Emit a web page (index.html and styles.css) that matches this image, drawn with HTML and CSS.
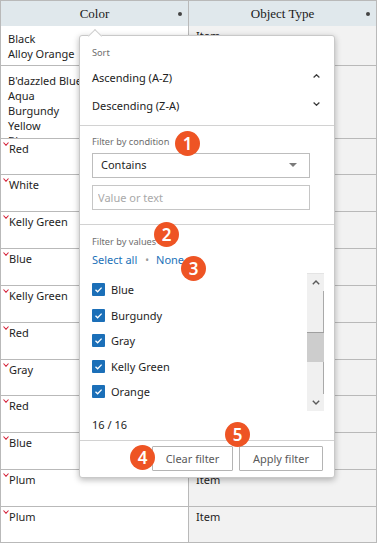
FILE: index.html
```html
<!DOCTYPE html>
<html lang="en">
<head>
<meta charset="utf-8">
<title>Filter menu</title>
<link rel="stylesheet" href="styles.css">
</head>
<body>
<div class="sheet">
  <div class="head">
    <div class="hcell c1"><span></span><span class="htext">Color</span><span class="dot"></span></div>
    <div class="hcell"><span></span><span class="htext">Object Type</span><span class="dot"></span></div>
  </div>

  <div class="row r1">
    <div class="cell c1 plain">Black<br>Alloy Orange</div>
    <div class="cell c2">Item</div>
  </div>
  <div class="row r2">
    <div class="cell c1 plain">B'dazzled Blue<br>Aqua<br>Burgundy<br>Yellow<br>Blue</div>
    <div class="cell c2">Item</div>
  </div>
  <div class="row s"><div class="cell c1"><svg class="mark" width="6" height="4" viewBox="0 0 6 4"><polyline points="0.5,0.5 3,3.3 5.5,0.5"/></svg>Red</div><div class="cell c2">Item</div></div>
  <div class="row"><div class="cell c1"><svg class="mark" width="6" height="4" viewBox="0 0 6 4"><polyline points="0.5,0.5 3,3.3 5.5,0.5"/></svg>White</div><div class="cell c2">Item</div></div>
  <div class="row"><div class="cell c1"><svg class="mark" width="6" height="4" viewBox="0 0 6 4"><polyline points="0.5,0.5 3,3.3 5.5,0.5"/></svg>Kelly Green</div><div class="cell c2">Item</div></div>
  <div class="row"><div class="cell c1"><svg class="mark" width="6" height="4" viewBox="0 0 6 4"><polyline points="0.5,0.5 3,3.3 5.5,0.5"/></svg>Blue</div><div class="cell c2">Item</div></div>
  <div class="row"><div class="cell c1"><svg class="mark" width="6" height="4" viewBox="0 0 6 4"><polyline points="0.5,0.5 3,3.3 5.5,0.5"/></svg>Kelly Green</div><div class="cell c2">Item</div></div>
  <div class="row"><div class="cell c1"><svg class="mark" width="6" height="4" viewBox="0 0 6 4"><polyline points="0.5,0.5 3,3.3 5.5,0.5"/></svg>Red</div><div class="cell c2">Item</div></div>
  <div class="row s"><div class="cell c1"><svg class="mark" width="6" height="4" viewBox="0 0 6 4"><polyline points="0.5,0.5 3,3.3 5.5,0.5"/></svg>Gray</div><div class="cell c2">Item</div></div>
  <div class="row"><div class="cell c1"><svg class="mark" width="6" height="4" viewBox="0 0 6 4"><polyline points="0.5,0.5 3,3.3 5.5,0.5"/></svg>Red</div><div class="cell c2">Item</div></div>
  <div class="row"><div class="cell c1"><svg class="mark" width="6" height="4" viewBox="0 0 6 4"><polyline points="0.5,0.5 3,3.3 5.5,0.5"/></svg>Blue</div><div class="cell c2">Item</div></div>
  <div class="row"><div class="cell c1"><svg class="mark" width="6" height="4" viewBox="0 0 6 4"><polyline points="0.5,0.5 3,3.3 5.5,0.5"/></svg>Plum</div><div class="cell c2">Item</div></div>
  <div class="row s"><div class="cell c1"><svg class="mark" width="6" height="4" viewBox="0 0 6 4"><polyline points="0.5,0.5 3,3.3 5.5,0.5"/></svg>Plum</div><div class="cell c2">Item</div></div>

  <div class="popup">
    <div class="notch"></div>
    <div class="sec sort">
      <div class="label">Sort</div>
      <div class="sitem"><span>Ascending (A-Z)</span><svg class="caret" width="7" height="4" viewBox="0 0 7 4"><polyline points="0.6,3.5 3.5,0.7 6.4,3.5"/></svg></div>
      <div class="sitem"><span>Descending (Z-A)</span><svg class="caret" width="7" height="4" viewBox="0 0 7 4"><polyline points="0.6,0.5 3.5,3.3 6.4,0.5"/></svg></div>
    </div>
    <div class="sec cond">
      <div class="label">Filter by condition</div>
      <div class="select"><span>Contains</span><svg width="8" height="4" viewBox="0 0 8 4"><polygon points="0,0 8,0 4,4"/></svg></div>
      <input class="txt" type="text" placeholder="Value or text">
    </div>
    <div class="sec vals">
      <div class="label">Filter by values</div>
      <div class="links"><span class="lnk">Select all</span><span class="bullet">•</span><span class="lnk">None</span></div>
      <div class="list">
        <div class="items">
          <div class="item"><span class="cb"><svg width="13" height="13" viewBox="0 0 13 13"><polyline points="3.5,6.8 5.6,8.8 9.6,4.6"/></svg></span>Blue</div>
          <div class="item"><span class="cb"><svg width="13" height="13" viewBox="0 0 13 13"><polyline points="3.5,6.8 5.6,8.8 9.6,4.6"/></svg></span>Burgundy</div>
          <div class="item"><span class="cb"><svg width="13" height="13" viewBox="0 0 13 13"><polyline points="3.5,6.8 5.6,8.8 9.6,4.6"/></svg></span>Gray</div>
          <div class="item"><span class="cb"><svg width="13" height="13" viewBox="0 0 13 13"><polyline points="3.5,6.8 5.6,8.8 9.6,4.6"/></svg></span>Kelly Green</div>
          <div class="item"><span class="cb"><svg width="13" height="13" viewBox="0 0 13 13"><polyline points="3.5,6.8 5.6,8.8 9.6,4.6"/></svg></span>Orange</div>
        </div>
        <div class="sbar">
          <div class="sbtn"><svg width="8" height="5" viewBox="0 0 8 5"><polyline points="0.8,4.2 4,1 7.2,4.2"/></svg></div>
          <div class="strack"><div class="sthumb"></div></div>
          <div class="sbtn"><svg width="8" height="5" viewBox="0 0 8 5"><polyline points="0.8,0.8 4,4 7.2,0.8"/></svg></div>
        </div>
      </div>
      <div class="count">16 / 16</div>
    </div>
    <div class="foot">
      <button class="btn clear">Clear filter</button>
      <button class="btn apply">Apply filter</button>
    </div>
  </div>

  <span class="badge b1">1</span>
  <span class="badge b2">2</span>
  <span class="badge b3">3</span>
  <span class="badge b4">4</span>
  <span class="badge b5">5</span>
</div>
</body>
</html>
```

FILE: styles.css
```css
* { box-sizing: border-box; }

body {
  margin: 0;
  background: #fff;
  font-family: "Noto Sans", "Open Sans", sans-serif;
  font-size: 11px;
  color: #1e1e1e;
}

.sheet {
  position: relative;
  width: 377px;
  height: 543px;
  overflow: hidden;
}

/* header */
.head {
  display: grid;
  grid-template-columns: 189px 188px;
  height: 26px;
  border-top: 1px solid #b9b9b9;
  background: #e0e8ec;
}
.hcell {
  display: grid;
  grid-template-columns: 1fr auto 1fr;
  align-items: center;
  padding-right: 6px;
  padding-left: 6px;
  border-right: 1px solid #b9b9b9;
}
.hcell.c1 { border-left: 1px solid #b9b9b9; }
.htext {
  font-family: "Liberation Serif", "Times New Roman", serif;
  font-size: 13px;
  color: #1a1a1a;
}
.dot {
  justify-self: end;
  width: 4px;
  height: 4px;
  border-radius: 50%;
  background: #444;
}

/* rows */
.row {
  display: grid;
  grid-template-columns: 189px 188px;
  height: 37px;
}
.row.s { height: 36px; }
.row.r1 { height: 40px; }
.row.r2 { height: 73px; }

.cell {
  border-right: 1px solid #b9b9b9;
  border-bottom: 1px solid #b9b9b9;
  line-height: 15px;
  padding-top: 2px;
  overflow: hidden;
  display: flex;
  align-items: flex-start;
}
.cell.c1 {
  border-left: 1px solid #b9b9b9;
  padding-left: 2px;
  background: #fff;
}
.cell.c1.plain {
  display: block;
  padding-left: 7px;
}
.r1 .cell.c1 { padding-top: 5px; }
.r2 .cell.c1 { padding-top: 7px; }
.cell.c2 {
  background: #f2f2f2;
  padding-left: 7px;
}
.mark {
  flex: none;
  margin-top: 1px;
  margin-right: 0;
}
.mark polyline {
  fill: none;
  stroke: #d5243a;
  stroke-width: 1.1;
}

/* popup */
.popup {
  position: absolute;
  left: 79px;
  top: 35px;
  width: 256px;
  background: #fff;
  border: 1px solid #c9c9c9;
  border-radius: 3px;
  box-shadow: 0 2px 6px rgba(0, 0, 0, 0.28);
}
.notch {
  position: absolute;
  left: 10px;
  top: -5px;
  width: 10px;
  height: 10px;
  background: #fff;
  border-left: 1px solid #cfcfcf;
  border-top: 1px solid #cfcfcf;
  transform: rotate(45deg);
}
.sec {
  position: relative;
  padding: 0 10px 0 12px;
  border-bottom: 1px solid #d2d2d2;
}
.label {
  font-size: 9.2px;
  line-height: 14px;
  color: #6e6e6e;
}

.sort { padding-top: 10px; padding-bottom: 6px; }
.sort .label { margin-bottom: 3px; }
.sitem {
  height: 28px;
  display: flex;
  align-items: center;
  justify-content: space-between;
  color: #222;
}
.caret {
  margin-right: 4px;
  margin-bottom: 3px;
}
.caret polyline {
  fill: none;
  stroke: #3a3a3a;
  stroke-width: 1.2;
}

.cond { padding-top: 9px; padding-bottom: 14px; }
.select {
  margin-top: 4px;
  width: 218px;
  height: 25px;
  border: 1px solid #bdbdbd;
  display: flex;
  align-items: center;
  justify-content: space-between;
  padding: 0 12px 2px 8px;
  color: #1e1e1e;
}
.select svg { margin-top: 0; }
.select polygon { fill: #7a7a7a; }
.txt {
  display: block;
  margin: 7px 0 0;
  width: 218px;
  height: 25px;
  border: 1px solid #c6c6c6;
  border-radius: 0;
  padding: 0 5px 1px;
  font-family: inherit;
  font-size: 11px;
  color: #222;
  outline: none;
}
.txt::placeholder { color: #a9a9a9; }

.vals { padding-top: 10px; padding-bottom: 7px; }
.links {
  margin-top: 3px;
  line-height: 16px;
  display: flex;
  align-items: center;
}
.lnk { color: #1b72b9; }
.bullet {
  color: #9a9a9a;
  margin: 0 7px 0 8px;
  font-size: 10px;
}
.list {
  margin-top: 5px;
  height: 138px;
  display: flex;
}
.items {
  flex: 1;
  padding-top: 4px;
}
.item {
  height: 25.5px;
  display: flex;
  align-items: center;
  gap: 6px;
  color: #1e1e1e;
}
.cb {
  flex: none;
  width: 13px;
  height: 13px;
  border-radius: 1px;
  background: #1b6fb8;
  display: block;
}
.cb svg { display: block; }
.cb polyline {
  fill: none;
  stroke: #fff;
  stroke-width: 1.3;
}
.sbar {
  width: 17px;
  display: flex;
  flex-direction: column;
  background: #f0f0f0;
  border-top: 1px solid #e4e4e4;
}
.sbtn {
  height: 17px;
  flex: none;
  display: flex;
  align-items: center;
  justify-content: center;
}
.sbtn polyline {
  fill: none;
  stroke: #5a5a5a;
  stroke-width: 1.4;
}
.strack {
  flex: 1;
  border-right: 1px solid #a9a9a9;
  padding-top: 41px;
}
.sthumb {
  height: 30px;
  margin-right: -1px;
  background: #cdcdcd;
  border-top: 1px solid #9f9f9f;
}
.count {
  margin-top: 6px;
  line-height: 16px;
  color: #222;
}

.foot {
  display: flex;
  justify-content: flex-end;
  gap: 6px;
  padding: 5px 11px 6px 12px;
}
.btn {
  height: 25px;
  border: 1px solid #b4b4b4;
  border-radius: 1px;
  background: #fff;
  color: #5a5a5a;
  font-family: inherit;
  font-size: 11px;
  padding: 0 0 1px;
}
.btn.clear { width: 81px; }
.btn.apply { width: 84px; }

/* numbered callouts */
.badge {
  position: absolute;
  width: 25px;
  height: 25px;
  border-radius: 50%;
  background: #ee5424;
  color: #fff;
  font-family: "Noto Sans", sans-serif;
  font-weight: 600;
  font-size: 17px;
  line-height: 25px;
  text-align: center;
}
.b1 { left: 175px; top: 131px; }
.b2 { left: 154px; top: 222px; }
.b3 { left: 181px; top: 256px; }
.b4 { left: 130px; top: 445px; }
.b5 { left: 225px; top: 422px; }
```
